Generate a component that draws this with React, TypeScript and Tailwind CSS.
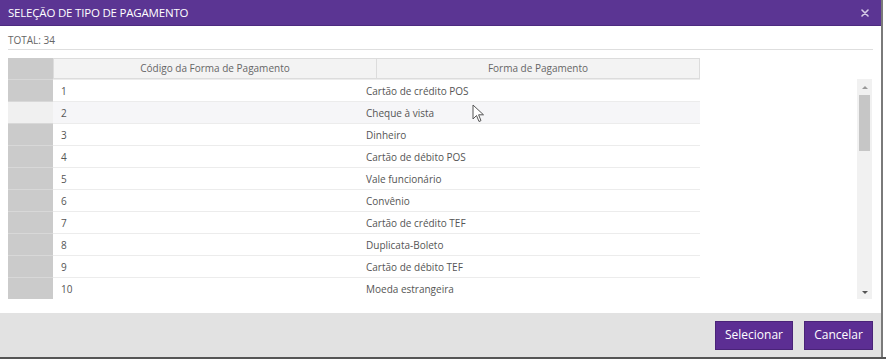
import React from "react";

const ROWS: [string, string][] = [
  ["1", "Cartão de crédito POS"],
  ["2", "Cheque à vista"],
  ["3", "Dinheiro"],
  ["4", "Cartão de débito POS"],
  ["5", "Vale funcionário"],
  ["6", "Convênio"],
  ["7", "Cartão de crédito TEF"],
  ["8", "Duplicata-Boleto"],
  ["9", "Cartão de débito TEF"],
  ["10", "Moeda estrangeira"],
];

function Cursor() {
  return (
    <svg width="14" height="20" viewBox="0 0 14 20" className="absolute left-[472px] top-[104px]">
      <path d="M1 1 L1 15 L4.5 11.5 L7 17.5 L9 16.6 L6.6 10.8 L11.5 10.8 Z" fill="#fff" stroke="#555" strokeWidth="1" strokeLinejoin="round" />
    </svg>
  );
}

export default function App() {
  return (
    <div className="relative w-[886px] h-[359px] bg-white overflow-hidden font-['Open_Sans',sans-serif]">
      <div className="flex flex-col h-[357px] w-[883px] border-r-2 border-[#7a7a7a]">
        {/* Title bar */}
        <div className="h-[26px] bg-[#5b3593] flex items-center justify-between pl-2 pr-[12px] border-b border-[#4d2b80]">
          <span className="text-white text-[11.5px] tracking-[-0.2px]">SELEÇÃO DE TIPO DE PAGAMENTO</span>
          <svg width="8" height="8" viewBox="0 0 8 8">
            <path d="M1 1 L7 7 M7 1 L1 7" stroke="#d6cce6" strokeWidth="1.6" strokeLinecap="round" />
          </svg>
        </div>

        <div className="flex-1 px-2">
          <div className="h-[24px] pt-[5px] flex items-center border-b border-[#dedede] text-[10px] text-[#666] w-[865px]">
            TOTAL: 34
          </div>

          <div className="flex mt-2">
            {/* Table */}
            <div className="flex flex-col w-[692px] text-[10px] text-[#555]">
              <div className="flex h-[21px] text-[#666]">
                <div className="w-[45px] bg-[#cbcbcb]" />
                <div className="w-[323px] bg-[#f3f3f3] border border-[#dcdcdc] border-r-0 flex items-center justify-center">
                  Código da Forma de Pagamento
                </div>
                <div className="w-[324px] bg-[#f3f3f3] border border-[#dcdcdc] flex items-center justify-center">
                  Forma de Pagamento
                </div>
              </div>
              {ROWS.map(([code, name], i) => (
                <div key={code} className={`flex h-[22px] ${i === 1 ? "bg-[#f6f6f8]" : "bg-white"}`}>
                  <div className={`w-[45px] border-t border-[#d8d8d8] ${i === 1 ? "bg-[#f0f0f0]" : "bg-[#cbcbcb]"}`} />
                  <div className="flex-1 flex items-center pt-px border-t border-[#ececec]">
                    <span className="w-[313px] pl-2">{code}</span>
                    <span>{name}</span>
                  </div>
                </div>
              ))}
            </div>

            {/* Scrollbar */}
            <div className="ml-[157px] mt-[21px] w-[15px] h-[220px] bg-[#f1f1f1] flex flex-col items-center">
              <div className="h-[16px] flex items-center justify-center">
                <div className="w-0 h-0 border-l-[3px] border-r-[3px] border-b-[3px] border-l-transparent border-r-transparent border-b-[#999]" />
              </div>
              <div className="w-[11px] h-[56px] bg-[#c6c6c6]" />
              <div className="flex-1" />
              <div className="h-[14px] flex items-center justify-center">
                <div className="w-0 h-0 border-l-[3px] border-r-[3px] border-t-[3px] border-l-transparent border-r-transparent border-t-[#555]" />
              </div>
            </div>
          </div>
        </div>

        {/* Footer */}
        <div className="h-[44px] bg-[#e2e2e2] flex items-center justify-end gap-[11px] pr-[8px]">
          <button className="h-[29px] w-[78px] bg-[#5c2e93] border border-[#4a2378] text-white text-[12px]">
            Selecionar
          </button>
          <button className="h-[29px] w-[69px] bg-[#5c2e93] border border-[#4a2378] text-white text-[12px]">
            Cancelar
          </button>
        </div>
      </div>
      <div className="h-[2px] bg-[#555]" />
      <Cursor />
    </div>
  );
}
